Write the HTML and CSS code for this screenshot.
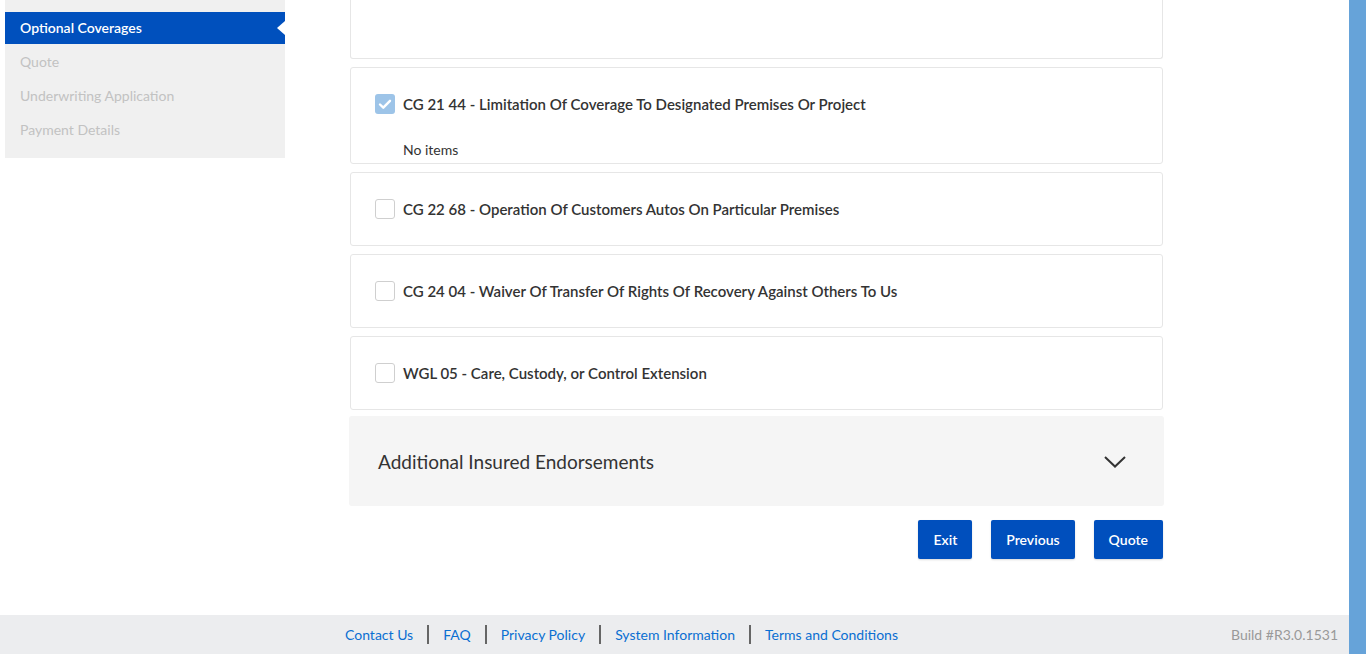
FILE: index.html
```html
<!DOCTYPE html>
<html lang="en">
<head>
<meta charset="utf-8">
<title>Optional Coverages</title>
<link rel="stylesheet" href="styles.css">
</head>
<body>
<div class="page">
  <div class="viewport">
    <div class="layout">
      <aside class="sidebar">
        <ul class="steps">
          <li class="step active">Optional Coverages</li>
          <li class="step">Quote</li>
          <li class="step">Underwriting Application</li>
          <li class="step">Payment Details</li>
        </ul>
      </aside>
      <main class="content">
        <div class="card card-top"></div>
        <div class="card">
          <label class="check-row">
            <span class="box checked"><svg viewBox="0 0 20 20" width="20" height="20"><path d="M5 10.5l3.3 3.2L15 6.8" fill="none" stroke="#fff" stroke-width="2.4" stroke-linecap="round" stroke-linejoin="round"/></svg></span>
            <span class="label">CG 21 44 - Limitation Of Coverage To Designated Premises Or Project</span>
          </label>
          <div class="sub">No items</div>
        </div>
        <div class="card">
          <label class="check-row"><span class="box"></span><span class="label">CG 22 68 - Operation Of Customers Autos On Particular Premises</span></label>
        </div>
        <div class="card">
          <label class="check-row"><span class="box"></span><span class="label">CG 24 04 - Waiver Of Transfer Of Rights Of Recovery Against Others To Us</span></label>
        </div>
        <div class="card">
          <label class="check-row"><span class="box"></span><span class="label">WGL 05 - Care, Custody, or Control Extension</span></label>
        </div>
        <div class="accordion">
          <span class="acc-title">Additional Insured Endorsements</span>
          <svg class="chev" viewBox="0 0 22 12" width="22" height="12"><path d="M1 1l10 9.5L21 1" fill="none" stroke="#333" stroke-width="2"/></svg>
        </div>
        <div class="actions">
          <button class="btn">Exit</button>
          <button class="btn">Previous</button>
          <button class="btn">Quote</button>
        </div>
      </main>
    </div>
    <footer class="footer">
      <nav class="links">
        <a href="#">Contact Us</a><span class="sep"></span>
        <a href="#">FAQ</a><span class="sep"></span>
        <a href="#">Privacy Policy</a><span class="sep"></span>
        <a href="#">System Information</a><span class="sep"></span>
        <a href="#">Terms and Conditions</a>
      </nav>
      <span class="build">Build #R3.0.1531</span>
    </footer>
  </div>
  <div class="scrollbar"></div>
</div>
</body>
</html>
```
FILE: styles.css
```css
* { box-sizing: border-box; }
html, body { margin: 0; padding: 0; }
body {
  font-family: "Lato", "Open Sans", sans-serif;
  color: #333;
  background: #fff;
  overflow: hidden;
}
.page {
  display: flex;
  width: 1366px;
  height: 654px;
}
.viewport {
  width: 1349px;
  display: flex;
  flex-direction: column;
}
.scrollbar {
  width: 17px;
  background: #66a3d9;
}
.layout {
  height: 615px;
  display: flex;
  align-items: flex-start;
}
.sidebar {
  margin-left: 5px;
  width: 280px;
  background: #f0f0f0;
  padding: 12px 0 11px;
}
.steps { list-style: none; margin: 0; padding: 0; }
.step {
  height: 34px;
  line-height: 34px;
  padding-left: 15px;
  font-size: 14px;
  color: #c2c2c2;
}
.step.active {
  position: relative;
  height: 32px;
  line-height: 32px;
  background: #0050bd;
  color: #fff;
  font-weight: 600;
  margin-bottom: 1px;
}
.step.active::after {
  content: "";
  position: absolute;
  right: 0;
  top: 9px;
  border-style: solid;
  border-width: 7px 8px 7px 0;
  border-color: transparent #fff transparent transparent;
}
.content {
  margin-left: 65px;
  width: 813px;
  display: flex;
  flex-direction: column;
}
.card {
  border: 1px solid #e6e6e6;
  border-radius: 3px;
  background: #fff;
  padding: 26px 24px 26px;
  margin-bottom: 8px;
}
.card-top {
  height: 59px;
  border-top: none;
  border-radius: 0 0 3px 3px;
  padding: 0;
}
.check-row {
  display: flex;
  align-items: center;
  gap: 8px;
  height: 20px;
}
.box {
  width: 20px;
  height: 20px;
  border: 1px solid #cfcfcf;
  border-radius: 3px;
  background: #fff;
  flex: none;
}
.box.checked {
  border: none;
  background: #9dc4e8;
  display: flex;
}
.label {
  font-size: 15px;
  font-weight: 600;
  color: #333;
  line-height: 20px;
  margin-top: -1px;
}
.card .sub {
  margin: 27px 0 -22px 28px;
  font-size: 14px;
  line-height: 18px;
  color: #333;
}
.accordion {
  margin-top: -2px;
  margin-left: -1px;
  margin-right: -1px;
  height: 90px;
  background: #f5f5f5;
  border-radius: 3px;
  display: flex;
  align-items: center;
  justify-content: space-between;
  padding: 0 38px 0 29px;
}
.acc-title {
  font-size: 19px;
  color: #333;
}
.chev { display: block; margin-top: 1px; }
.actions {
  display: flex;
  justify-content: flex-end;
  gap: 18px;
  margin-top: 14px;
}
.btn {
  height: 39px;
  border: none;
  border-radius: 2px;
  background: #004fbd;
  color: #fff;
  font-family: inherit;
  font-size: 14px;
  font-weight: 600;
  padding: 0 15px;
  box-shadow: 0 1px 2px rgba(0,0,0,0.15);
}
.btn + .btn { margin-left: 1px; }
.footer {
  height: 39px;
  background: #ecedef;
  display: flex;
  align-items: center;
  justify-content: space-between;
  padding: 0 11px 0 345px;
}
.links {
  display: flex;
  align-items: center;
}
.links a {
  font-size: 14px;
  color: #0a6fd2;
  text-decoration: none;
}
.sep {
  width: 2px;
  height: 19px;
  background: #666;
  margin: 0 14px;
}
.build {
  font-size: 14px;
  color: #999;
}
```
